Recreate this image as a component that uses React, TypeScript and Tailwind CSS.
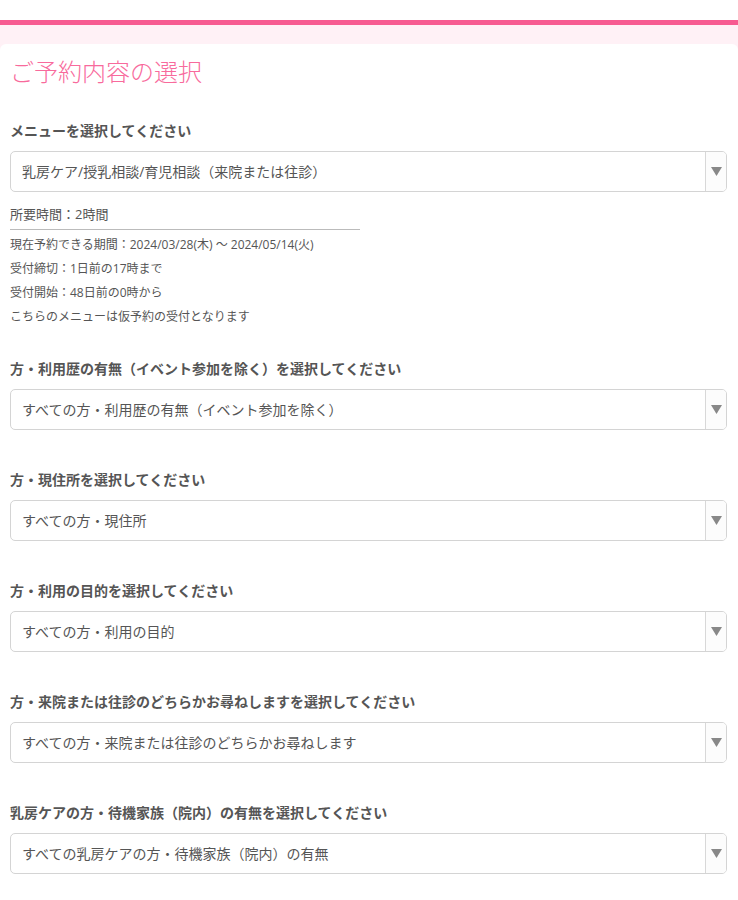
import React from 'react'

type Field = {
  label: string
  value: string
}

const FIELDS: Field[] = [
  {
    label: '方・利用歴の有無（イベント参加を除く）を選択してください',
    value: 'すべての方・利用歴の有無（イベント参加を除く）',
  },
  { label: '方・現住所を選択してください', value: 'すべての方・現住所' },
  { label: '方・利用の目的を選択してください', value: 'すべての方・利用の目的' },
  {
    label: '方・来院または往診のどちらかお尋ねしますを選択してください',
    value: 'すべての方・来院または往診のどちらかお尋ねします',
  },
  {
    label: '乳房ケアの方・待機家族（院内）の有無を選択してください',
    value: 'すべての乳房ケアの方・待機家族（院内）の有無',
  },
]

function SelectBox({ value }: { value: string }) {
  return (
    <div className="mt-[10px] flex h-[41px] w-[717px] items-stretch overflow-hidden rounded-[5px] border border-[#d4d4d4] bg-white">
      <div className="flex flex-1 items-center pl-[11px] text-[14px] text-[#555]">{value}</div>
      <div className="flex w-[21px] items-center justify-center border-l border-[#d8d8d8] bg-[#fcfcfc]">
        <svg width="11" height="9" viewBox="0 0 11 9">
          <path d="M0 0 L11 0 L5.5 9 Z" fill="#888" />
        </svg>
      </div>
    </div>
  )
}

export default function App() {
  return (
    <div
      className="min-h-[900px] bg-white"
      style={{ fontFamily: '"Open Sans", "Noto Sans CJK JP", sans-serif' }}
    >
      <div className="h-5 bg-white" />
      <div className="h-[5px] bg-[#f75b91]" />
      <div className="bg-[#fff1f6] pt-[19px]">
        <div className="rounded-t-[6px] bg-white px-[10px] pt-[10px] pb-[40px]">
          {/* Title */}
          <h1 className="text-[24px] leading-[36px] font-light text-[#f86a9c]">ご予約内容の選択</h1>

          {/* Menu select */}
          <div className="mt-[31px] text-[14px] leading-[20px] font-bold text-[#555]">
            メニューを選択してください
          </div>
          <SelectBox value="乳房ケア/授乳相談/育児相談（来院または往診）" />

          <div className="mt-[12px] w-[350px] border-b border-[#bbb] pb-[5px] text-[13px] leading-[20px] text-[#555]">
            所要時間：2時間
          </div>
          <div className="mt-[3px] text-[12px] leading-[24px] text-[#555]">
            <div>現在予約できる期間：2024/03/28(木) 〜 2024/05/14(火)</div>
            <div>受付締切：1日前の17時まで</div>
            <div>受付開始：48日前の0時から</div>
            <div>こちらのメニューは仮予約の受付となります</div>
          </div>

          {FIELDS.map((f, i) => (
            <div key={f.label} className={i === 0 ? 'mt-[30px]' : 'mt-[40px]'}>
              <div className="text-[14px] leading-[20px] font-bold text-[#555]">{f.label}</div>
              <SelectBox value={f.value} />
            </div>
          ))}
        </div>
      </div>
    </div>
  )
}
